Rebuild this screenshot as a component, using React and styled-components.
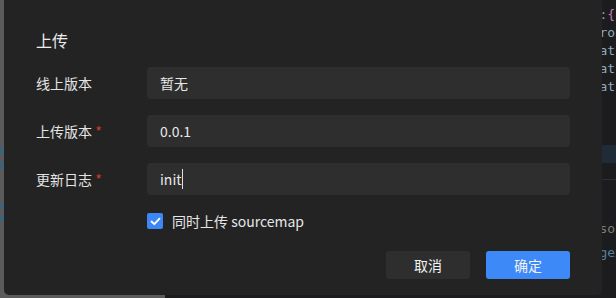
import React from "react";
import styled, { createGlobalStyle } from "styled-components";

const Global = createGlobalStyle`
  html, body { margin: 0; padding: 0; background: #1e1e1e; }
  body { width: 616px; height: 298px; overflow: hidden; }
  * { box-sizing: border-box; }
`;

const Page = styled.div`
  position: relative;
  width: 616px;
  height: 298px;
  display: flex;
  overflow: hidden;
  font-family: "Noto Sans CJK SC", "Noto Sans", sans-serif;
`;

const SidePane = styled.div`
  width: 165px;
  flex-shrink: 0;
  height: 100%;
  background: #5b5b5b;
  position: relative;
`;

const Editor = styled.div`
  flex: 1;
  min-width: 0;
  overflow: hidden;
  height: 100%;
  background: #1c1c1e;
  display: flex;
  flex-direction: column;
  padding: 6px 0 0 4px;
  font-family: "DejaVu Sans Mono", monospace;
  font-size: 13px;
`;

const CodeLine = styled.div`
  height: 18px;
  line-height: 18px;
  white-space: pre;
  flex-shrink: 0;
  color: ${(p) => p.$color || "#8fa9be"};
  background: ${(p) => (p.$active ? "#1f2b36" : "transparent")};
  margin-top: ${(p) => p.$gap || 0}px;
  margin-left: ${(p) => (p.$full ? "-4px" : "0")};
  border-top: ${(p) => (p.$rule ? "1px solid #2f2f33" : "none")};
`;

const Brace = styled.span`
  color: #c678b4;
`;

const Colon = styled.span`
  color: #9a9a9a;
`;

const Chevrons = styled.svg`
  position: absolute;
  left: 0;
  top: 140px;
`;

const Modal = styled.div`
  position: absolute;
  left: 4px;
  top: 0;
  width: 598px;
  height: 295px;
  background: #232323;
  border-radius: 0 0 5px 5px;
  padding: 28px 32px 16px;
  display: flex;
  flex-direction: column;
`;

const Title = styled.div`
  height: 24px;
  line-height: 24px;
  font-size: 16px;
  color: #ececec;
  margin-bottom: 15px;
`;

const Form = styled.div`
  display: flex;
  flex-direction: column;
  gap: 16px;
`;

const Row = styled.div`
  display: grid;
  grid-template-columns: 111px 1fr;
  align-items: center;
  height: 32px;
`;

const Label = styled.div`
  font-size: 14px;
  color: #e4e4e4;
  display: flex;
  align-items: center;
`;

const Required = styled.span`
  color: #e0402c;
  font-family: "Liberation Sans", sans-serif;
  font-size: 13px;
  margin-left: 4px;
  position: relative;
  top: -1px;
`;

const Field = styled.div`
  height: 32px;
  background: #2e2e2e;
  border-radius: 4px;
  padding: 0 13px;
  display: flex;
  align-items: center;
  font-size: 14px;
  color: #e8e8e8;
`;

const Caret = styled.span`
  display: inline-block;
  width: 1px;
  height: 20px;
  background: #e0e0e0;
`;

const CheckRow = styled.label`
  margin-top: 18px;
  padding-left: 111px;
  height: 16px;
  display: flex;
  align-items: center;
  gap: 9px;
  font-size: 14px;
  color: #e6e6e6;
`;

const Box = styled.span`
  width: 16px;
  height: 16px;
  border-radius: 2px;
  background: #3d87f5;
  display: flex;
  align-items: center;
  justify-content: center;
`;

const Footer = styled.div`
  margin-top: 22px;
  display: flex;
  justify-content: flex-end;
  gap: 16px;
`;

const Button = styled.button`
  width: 84px;
  height: 28px;
  border: none;
  border-radius: 3px;
  font-family: inherit;
  font-size: 14px;
  color: #f2f2f2;
  background: ${(p) => (p.$primary ? "#3d89f8" : "#2e2e2e")};
  padding: 0;
  cursor: pointer;
`;

const pad = " ".repeat(55);

export default function App() {
  return (
    <>
      <Global />
      <Page>
        <SidePane>
          <Chevrons width="10" height="90" viewBox="0 0 10 90">
            <path d="M-2 4 L6 18 L-2 32" stroke="#2d6787" strokeWidth="2.2" fill="none" />
            <path d="M-2 60 L6 72 L-2 84" stroke="#2d6787" strokeWidth="2.2" fill="none" />
          </Chevrons>
        </SidePane>
        <Editor>
          <CodeLine>{pad}<Colon>:</Colon><Brace>{"{"}</Brace></CodeLine>
          <CodeLine>{pad}ron</CodeLine>
          <CodeLine>{pad}at.</CodeLine>
          <CodeLine>{pad}at.</CodeLine>
          <CodeLine>{pad}at.</CodeLine>
          <CodeLine $active $full $gap={49}> </CodeLine>
          <CodeLine $rule $full $gap={16}> </CodeLine>
          <CodeLine $gap={23} $color="#7c7c7c">{pad}sole</CodeLine>
          <CodeLine $gap={6} $color="#4f7fa0">{pad}gex</CodeLine>
        </Editor>
        <Modal>
          <Title>上传</Title>
          <Form>
            <Row>
              <Label>线上版本</Label>
              <Field>暂无</Field>
            </Row>
            <Row>
              <Label>
                上传版本<Required>*</Required>
              </Label>
              <Field>0.0.1</Field>
            </Row>
            <Row>
              <Label>
                更新日志<Required>*</Required>
              </Label>
              <Field>
                init
                <Caret />
              </Field>
            </Row>
          </Form>
          <CheckRow>
            <Box>
              <svg width="11" height="9" viewBox="0 0 11 9">
                <path d="M1.5 4.5 L4.3 7.2 L9.5 1.6" stroke="#fff" strokeWidth="1.8" fill="none" strokeLinecap="round" strokeLinejoin="round" />
              </svg>
            </Box>
            同时上传 sourcemap
          </CheckRow>
          <Footer>
            <Button>取消</Button>
            <Button $primary>确定</Button>
          </Footer>
        </Modal>
      </Page>
    </>
  );
}
